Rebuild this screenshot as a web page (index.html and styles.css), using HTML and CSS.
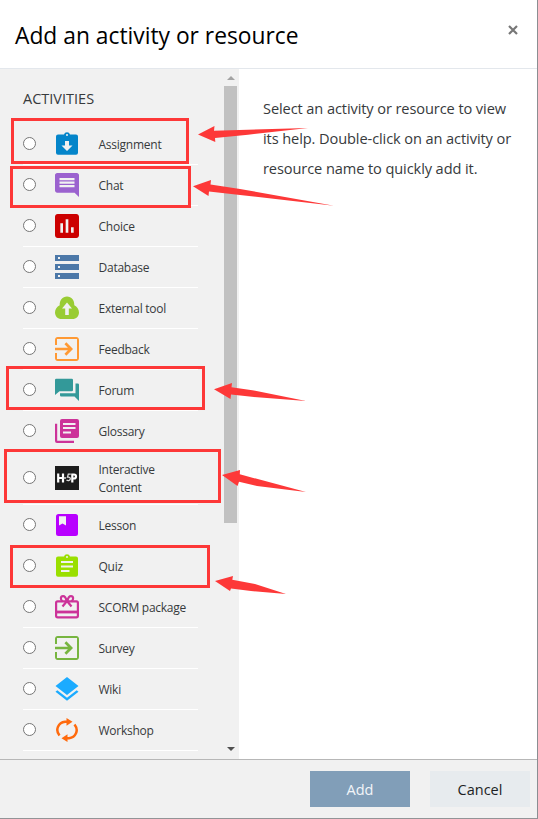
FILE: index.html
```html
<!DOCTYPE html>
<html lang="en">
<head>
<meta charset="utf-8">
<title>Add an activity or resource</title>
<link rel="stylesheet" href="styles.css">
</head>
<body>
<div class="dialog">
  <header class="header">
    <h1 class="title">Add an activity or resource</h1>
    <button class="close" aria-label="Close"><svg viewBox="0 0 10 10"><path d="M1 1l8 8M9 1L1 9"/></svg></button>
  </header>
  <main class="main">
    <section class="panel">
      <div class="list">
        <h2 class="heading">ACTIVITIES</h2>
        <label class="row"><input type="radio" name="m"><svg class="icon" fill="#0485ca" viewBox="0 0 24 24"><path fill-rule="evenodd" d="M3 2.500h6a3.100 3.100 0 0 1 6 0h6q2 0 2 2v16.300q0 2-2 2H3q-2 0-2-2V4.500q0-2 2-2zM12 2a1 1 0 1 0 0 2 1 1 0 0 0 0-2zM10 9h4v4.500h3.500L12 19l-5.500-5.500H10z"/></svg><span class="name">Assignment</span></label>
        <label class="row"><input type="radio" name="m"><svg class="icon" fill="#9b62cf" viewBox="0 0 24 24"><path d="M24 2.200C24 1 23 0 21.800 0H2.200C1 0 0 1 0 2.200v15.400C0 18.800 1 19.800 2.200 19.800h17.400L24 24zM19.500 14.300h-15v-2.200h15zm0-3.500h-15V8.600h15zm0-3.600h-15V5h15z"/></svg><span class="name">Chat</span></label>
        <label class="row"><input type="radio" name="m"><svg class="icon" fill="#c00" viewBox="3 3 18 18"><path d="M19 3H5c-1.100 0-2 .9-2 2v14c0 1.100.9 2 2 2h14c1.100 0 2-.9 2-2V5c0-1.100-.9-2-2-2zM9 17H7v-7h2v7zm4 0h-2V7h2v10zm4 0h-2v-4h2v4z"/></svg><span class="name">Choice</span></label>
        <label class="row"><input type="radio" name="m"><svg class="icon" fill="#4c78a8" viewBox="0 0 24 24"><path fill-rule="evenodd" d="M0 0h24v6H0zM3 2v2h2V2zM0 9h24v6H0zM3 11v2h2v-2zM0 18h24v6H0zM3 20v2h2v-2z"/></svg><span class="name">Database</span></label>
        <label class="row"><input type="radio" name="m"><svg class="icon" viewBox="0 0 24 24"><path fill="#9c3" d="M4.700 9.300C4.500 4.300 7.500.6 12 .6s7.500 3.700 7.300 8.700c2.800 1.200 4.700 4.300 4.700 7.200 0 3.800-2.800 6.500-6.500 6.500h-11C2.800 23 0 20.300 0 16.500c0-2.900 1.900-6 4.700-7.200z"/><path fill="#f1f1f1" d="M12 6.500l5 6h-3.200V19h-3.600v-6.500H7z"/></svg><span class="name">External tool</span></label>
        <label class="row"><input type="radio" name="m"><svg class="icon" fill="#ff9933" viewBox="3 3 18 18"><path d="M10.090 15.590L11.500 17l5-5-5-5-1.410 1.410L12.670 11H3v2h9.670l-2.580 2.590zM19 3H5c-1.110 0-2 .9-2 2v4h1.500V4.500h15v15h-15V15H3v4c0 1.100.89 2 2 2h14c1.100 0 2-.9 2-2V5c0-1.100-.9-2-2-2z"/></svg><span class="name">Feedback</span></label>
        <label class="row"><input type="radio" name="m"><svg class="icon" fill="#399" viewBox="0 0 24 24"><path d="M1.200.8h15.600Q18 .8 18 2v10q0 1.200-1.200 1.200H4.500L0 17V2Q0 .8 1.200.8zM20.500 5.500h2.300Q24 5.500 24 6.700V23l-4.500-4.500H6.200Q5 18.500 5 17.300v-2h15.500z"/></svg><span class="name">Forum</span></label>
        <label class="row"><input type="radio" name="m"><svg class="icon" fill="#cc3399" viewBox="0 0 24 24"><path fill-rule="evenodd" d="M7 0h15q2 0 2 2v15q0 2-2 2H7q-2 0-2-2V2q0-2 2-2zm1 4v2h12.500V4zm0 4v2h12.500V8zm0 4.500v2h8v-2zM0 4.800h2.200v17H19V24H2q-2 0-2-2z"/></svg><span class="name">Glossary</span></label>
        <label class="row row-tall"><input type="radio" name="m"><svg class="icon" viewBox="0 0 24 24"><path fill="#1c1c1c" d="M0 0h24v24H0z"/><path fill="none" stroke="#fff" stroke-width="2.200" d="M3.200 7.500v9M8 7.500v9M3.200 12H8M17.300 16.500v-8h1.700q2 0 2 2t-2 2h-1.700"/><path fill="none" stroke="#ddd" stroke-width="1.300" d="M15.800 8.200h-2.500l-.8 3c2-.4 3.100.4 2.800 1.800-.4 1.800-2.500 2-3.800 1M8.500 12h2.500"/></svg><span class="name">Interactive Content</span></label>
        <label class="row"><input type="radio" name="m"><svg class="icon" fill="#b800ff" viewBox="0 0 24 24"><path fill-rule="evenodd" d="M3.500 1h17Q23 1 23 3.500v17q0 2.500-2.500 2.500h-17Q1 23 1 20.500v-17Q1 1 3.500 1zM4 3.200v9.300l3.500-2 3.500 2V3.200z"/></svg><span class="name">Lesson</span></label>
        <label class="row"><input type="radio" name="m"><svg class="icon" fill="#9adf00" viewBox="0 0 24 24"><path fill-rule="evenodd" d="M3 2.500h6a3.100 3.100 0 0 1 6 0h6q2 0 2 2v16.300q0 2-2 2H3q-2 0-2-2V4.500q0-2 2-2zM12 2a1 1 0 1 0 0 2 1 1 0 0 0 0-2zM6 7v2h12V7zm0 4.500v2h12v-2zM6 16v2h8.500v-2z"/></svg><span class="name">Quiz</span></label>
        <label class="row"><input type="radio" name="m"><svg class="icon" viewBox="0 0 24 24"><g fill="none" stroke="#cc3399" stroke-width="2.200"><rect x="1.100" y="6.300" width="21.800" height="16" rx="1.500"/><path d="M0 17h24" stroke-width="2.800"/><path d="M12 6L7.500 11.500M12 6l4.500 5.500M11.500 6C11 2.800 9.800 1.200 8 1.200c-2.600 0-2.900 3.500-.5 5M12.500 6c.5-3.200 1.700-4.800 3.500-4.800 2.600 0 2.900 3.500.5 5"/></g></svg><span class="name">SCORM package</span></label>
        <label class="row"><input type="radio" name="m"><svg class="icon" fill="#77b540" viewBox="3 3 18 18"><path d="M10.090 15.590L11.500 17l5-5-5-5-1.410 1.410L12.670 11H3v2h9.670l-2.580 2.590zM19 3H5c-1.110 0-2 .9-2 2v4h1.500V4.500h15v15h-15V15H3v4c0 1.100.89 2 2 2h14c1.100 0 2-.9 2-2V5c0-1.100-.9-2-2-2z"/></svg><span class="name">Survey</span></label>
        <label class="row"><input type="radio" name="m"><svg class="icon" fill="#1babff" viewBox="0 0 24 24"><path d="M12 0l11.500 9L12 18 .5 9zM.5 14.700l1.800-1.500L12 20.800l9.700-7.600 1.800 1.500L12 23.800z"/></svg><span class="name">Wiki</span></label>
        <label class="row"><input type="radio" name="m"><svg class="icon" viewBox="0 0 24 24"><path fill="none" stroke="#ff6a0d" stroke-width="2.500" d="M4.500 17.600C-.3 11.500 3.500 4.500 10 3.700h3.500M19.500 6.400c4.800 6.100 1 13.100-5.500 13.900h-3.500"/><path fill="#ff6a0d" d="M11.500 0l6 3.700-6 4zM12.500 16.300l-6 4 6 3.700z"/></svg><span class="name">Workshop</span></label>
      </div>
      <div class="scrollbar"><i class="up"></i><i class="thumb"></i><i class="down"></i></div>
    </section>
    <p class="help">Select an activity or resource to view<br>its help. Double-click on an activity or<br>resource name to quickly add it.</p>
  </main>
  <footer class="footer">
    <button class="btn add">Add</button>
    <button class="btn cancel">Cancel</button>
  </footer>
</div>
<svg class="marks" viewBox="0 0 538 819">
  <g fill="none" stroke="#fd3838" stroke-width="3">
    <rect x="12.500" y="119.500" width="175" height="43"/>
    <rect x="11.500" y="167.500" width="178" height="39"/>
    <rect x="7.500" y="367.500" width="196" height="41"/>
    <rect x="5.500" y="450.500" width="214" height="51"/>
    <rect x="11.500" y="546.500" width="197" height="40"/>
  </g>
  <g fill="#fd3838">
    <path d="M198 134.500L214.500 126l-.5 4.700L308 128l-60 6.700L215 138l.3 4z"/>
    <path d="M193 186.300L211 180l-.5 4.500 29.500 4.500 94 16.800-94-10.800-31-3.500-.5 4.500z"/>
    <path d="M214 389.300L232 383l-.5 4.300 22.500 3.200L306 401l-52-4-23-2.500-.5 4.500z"/>
    <path d="M222 475L240 470l-.2 4.300L306 492l-49-6-18-4.200-1.500 4.200z"/>
    <path d="M215 581L233 576l-.7 3.700L255 584l31 10-35-3-20-2.500-1 2.500z"/>
  </g>
</svg>
</body>
</html>
```
FILE: styles.css
```css
* { box-sizing: border-box; }
body { margin: 0; font-family: "Open Sans", "Noto Sans", sans-serif; color: #373a3c; background: #fff; overflow: hidden; }
.dialog { width: 538px; height: 819px; display: flex; flex-direction: column; border-right: 1px solid #8b8e92; border-bottom: 1px solid #929497; }
.header { height: 69px; flex: none; display: flex; justify-content: space-between; align-items: flex-start; padding: 20px 19px 0 15px; border-bottom: 1px solid #e3e7ec; }
.title { margin: 0; font-size: 22.8px; line-height: 31px; font-weight: 400; color: #000; white-space: nowrap; }
.close { border: 0; background: none; padding: 0; width: 10px; height: 10px; margin-top: 5px; display: flex; }
.close svg { width: 10px; height: 10px; fill: none; stroke: #777; stroke-width: 2.2; }
.main { height: 690px; flex: none; display: flex; }
.panel { width: 239px; display: flex; justify-content: space-between; background: #f1f1f1; overflow: hidden; }
.list { width: 198px; padding: 18px 0 0 23px; }
.heading { margin: 0; height: 37px; line-height: 23px; font-size: 14.5px; font-weight: 400; }
.row { height: 41px; display: flex; align-items: center; border-bottom: 1px solid #fff; }
.row-tall { height: 53px; }
.row input { appearance: none; width: 13px; height: 13px; border: 1px solid #767676; border-radius: 50%; background: #fff; margin: 0 19px 1px 0; flex: none; }
.icon { width: 24px; height: 24px; flex: none; margin-right: 19.5px; }
.name { font-size: 12px; letter-spacing: -.25px; line-height: 18px; padding-top: 2px; white-space: nowrap; }
.row-tall .name { width: 80px; white-space: normal; }
.scrollbar { width: 15px; padding-right: 2px; display: flex; flex-direction: column; align-items: center; }
.up, .down { border: 4px solid transparent; width: 0; height: 0; flex: none; }
.up { border-top: 0; border-bottom-color: #a3a3a3; margin: 7px 0 6px; }
.thumb { width: 13px; height: 437px; background: #c1c1c1; flex: none; }
.down { border-bottom: 0; border-top-color: #505050; margin: auto 0 8px; }
.help { margin: 0; padding: 24px 0 0 24px; font-size: 14.6px; letter-spacing: -.1px; line-height: 30px; white-space: nowrap; }
.footer { flex: 1; border-top: 1px solid #b7b7b7; background: #f1f1f1; display: flex; justify-content: flex-end; padding: 11px 7px 0 0; gap: 20px; }
.btn { width: 100px; height: 36px; border: 0; padding: 1px 0 0; font: 400 14.5px/35px "Open Sans", sans-serif; }
.add { background: #819eb8; color: #f2f5f8; font-weight: 500; }
.cancel { background: #e7ebee; color: #1c1f24; }
.marks { position: absolute; left: 0; top: 0; width: 538px; height: 819px; pointer-events: none; }
```
